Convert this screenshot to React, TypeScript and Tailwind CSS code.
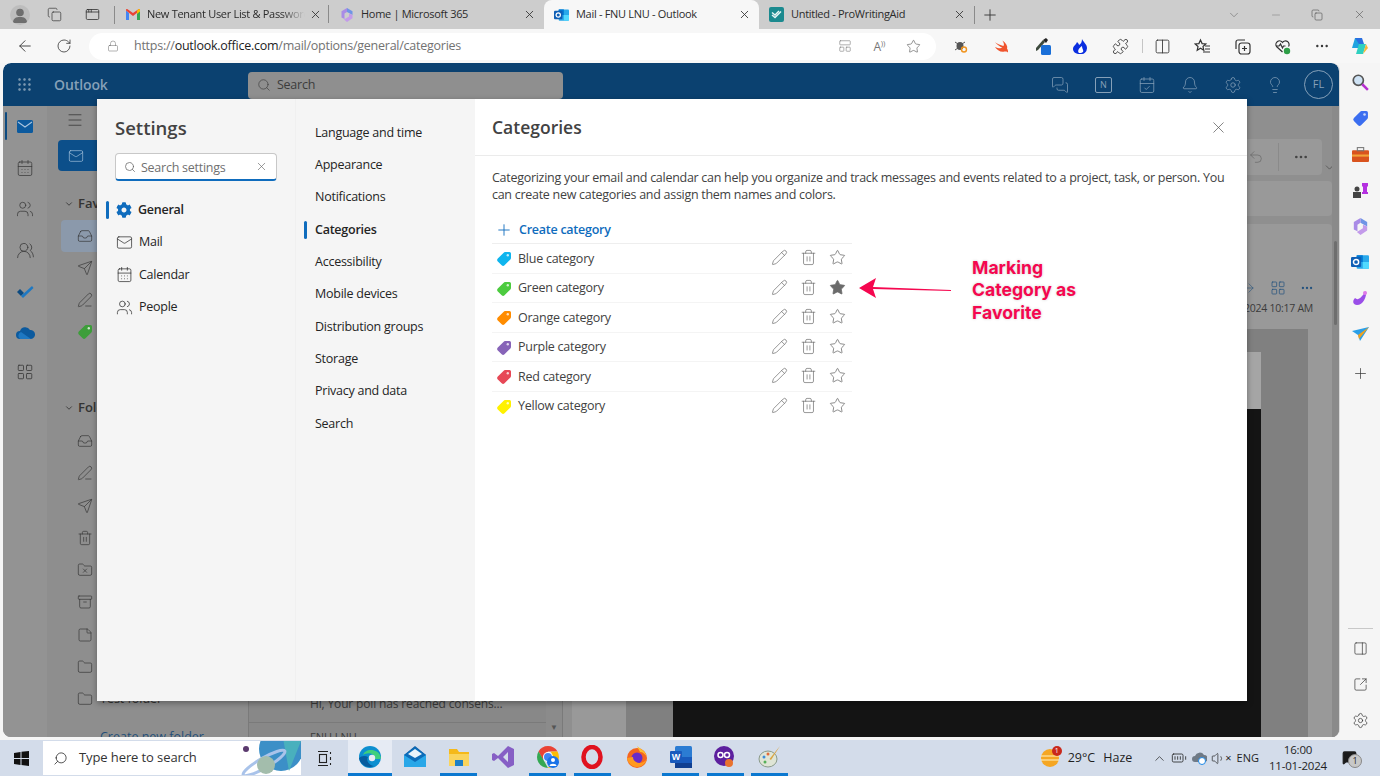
import {
  ArrowLeft, RotateCw, Lock, Star, Plus, X, ChevronDown, ChevronUp, Minus, Copy, Ellipsis, Search, Bell, Settings, Lightbulb,
  Menu, Mail, CalendarDays, Users, UsersRound, Inbox, Send, PenLine, Pencil, Trash2, FolderX, Archive, StickyNote, Folder,
  Undo2, LayoutGrid, ArrowRight, MessagesSquare, CalendarCheck, SquareArrowOutUpRight, PanelRight, Puzzle, Columns2,
  AppWindow, Grip, Volume1, LayoutPanelTop, MessageSquare, BatteryFull,
} from 'lucide-react';
import { FaCog } from 'react-icons/fa';

const font = "font-['Open_Sans','Noto_Sans',sans-serif]";

function Tag({ color, size = 16 }: { color: string; size?: number }) {
  return (
    <svg width={size} height={size} viewBox="0 0 16 16" className="shrink-0">
      <path d="M9 1h4.5A1.5 1.5 0 0 1 15 2.5V7a2 2 0 0 1-.6 1.4l-5.9 5.9a2 2 0 0 1-2.8 0l-3.9-3.9a2 2 0 0 1 0-2.8l5.9-5.9A2 2 0 0 1 9 1z" fill={color} />
      <circle cx="11.8" cy="4.2" r="1.2" fill="#fff" fillOpacity="0.75" />
    </svg>
  );
}

function GmailIcon() {
  return (
    <svg width="14" height="11" viewBox="0 0 14 11">
      <path d="M0 1.5V11h3V4z" fill="#4285f4" />
      <path d="M14 1.5V11h-3V4z" fill="#34a853" />
      <path d="M0 1.5 7 7l7-5.5V1a1 1 0 0 0-1.6-.8L7 4 1.6.2A1 1 0 0 0 0 1z" fill="#ea4335" />
      <path d="M11 1.8V5l3-2.4V1a1 1 0 0 0-1.6-.8z" fill="#fbbc04" />
    </svg>
  );
}

function M365Icon({ size = 14 }: { size?: number }) {
  return (
    <svg width={size} height={size} viewBox="0 0 14 14">
      <path d="M7 0 12.5 3.2V7L9.5 5.3 7 4z" fill="#6f94e6" />
      <path d="M1.5 3.2 7 0v4L4.5 5.5V11L1.5 9.5z" fill="#a98be6" />
      <path d="M12.5 7v3.2L7 14l-3-2.5 5-3V5.5z" fill="#c39bea" />
    </svg>
  );
}

function OutlookIcon({ size = 16 }: { size?: number }) {
  return (
    <svg width={size} height={size} viewBox="0 0 16 16">
      <rect x="5" y="2" width="11" height="12" rx="1" fill="#28a8ea" />
      <rect x="5" y="2" width="5.5" height="6" fill="#0078d4" />
      <rect x="10.5" y="8" width="5.5" height="6" fill="#50d9ff" />
      <rect x="0" y="3.5" width="9" height="9" rx="1" fill="#0f5fb5" />
      <circle cx="4.5" cy="8" r="2.3" fill="none" stroke="#fff" strokeWidth="1.3" />
    </svg>
  );
}

function PwaIcon() {
  return (
    <svg width="15" height="15" viewBox="0 0 15 15">
      <rect width="15" height="15" rx="2" fill="#1b8a8f" />
      <path d="M3 8l3 2.5 6-6M3 5.5l3 2.5 4-4" fill="none" stroke="#e9f6f6" strokeWidth="1.4" />
    </svg>
  );
}

function EdgeIcon() {
  return (
    <svg width="24" height="24" viewBox="0 0 24 24">
      <circle cx="12" cy="12" r="11" fill="#0c8fd0" />
      <path d="M23 13c-1-6-6-8-10-8-4 0-7 2-8 5 3-2 10-3 11 2 0 1-1 2-2 2h6c2 0 3-.5 3-1z" fill="#3fcf7c" />
      <path d="M10 12c-2 3 0 8 6 9-6 3-14-1-15-8 2-2 6-3 9-1z" fill="#075c9e" />
      <circle cx="14" cy="13" r="3.2" fill="#e6ebf4" />
    </svg>
  );
}

function TaskIcon({ kind }: { kind: string }) {
  if (kind === 'edge') return <EdgeIcon />;
  if (kind === 'mail')
    return (
      <svg width="24" height="24" viewBox="0 0 24 24">
        <path d="M12 1 23 10v12H1V10z" fill="#0b5fa8" />
        <rect x="1" y="10" width="22" height="12" fill="#29a7e8" />
        <path d="M1 10l11 7 11-7-11-8z" fill="#0c6cb9" />
        <path d="M5 9l7-5 7 5-7 4z" fill="#e8f3fb" />
      </svg>
    );
  if (kind === 'explorer')
    return (
      <svg width="22" height="22" viewBox="0 0 22 22">
        <path d="M1 3h8l2 3h10v14H1z" fill="#f5b91a" />
        <rect x="1" y="8" width="20" height="12" fill="#fad45c" />
        <rect x="7" y="14" width="8" height="6" fill="#1c7fc7" />
      </svg>
    );
  if (kind === 'vs')
    return (
      <svg width="22" height="24" viewBox="0 0 22 24">
        <path d="M16 1l6 3v16l-6 3L6 13l-4 3-2-1V9l2-1 4 3zM16 7l-5 5 5 5z" fill="#865fc5" fillRule="evenodd" />
      </svg>
    );
  if (kind === 'chrome')
    return (
      <svg width="24" height="24" viewBox="0 0 24 24">
        <path d="M12 1a11 11 0 0 1 9.5 5.5H12z" fill="#ea4335" />
        <path d="M2.5 6.5A11 11 0 0 1 12 1v5.5L7 15z" fill="#ea4335" />
        <path d="M2.5 6.5 7.5 15l4.5 8A11 11 0 0 1 2.5 6.5z" fill="#34a853" />
        <path d="M21.5 6.5A11 11 0 0 1 12 23l5-8-2-8.5z" fill="#fbbc04" />
        <circle cx="12" cy="12" r="5" fill="#fff" />
        <circle cx="12" cy="12" r="4" fill="#4285f4" />
        <circle cx="17" cy="17" r="6" fill="#1a73e8" />
        <circle cx="17" cy="15" r="2" fill="#fff" />
        <path d="M13.5 21c0-3 7-3 7 0z" fill="#fff" />
      </svg>
    );
  if (kind === 'opera')
    return (
      <svg width="22" height="24" viewBox="0 0 22 24">
        <ellipse cx="11" cy="12" rx="8.5" ry="10" fill="none" stroke="#e0121f" strokeWidth="4.5" />
      </svg>
    );
  if (kind === 'firefox')
    return (
      <svg width="22" height="24" viewBox="0 0 22 24">
        <circle cx="11" cy="13" r="10" fill="#f5651f" />
        <path d="M11 1c3 3 8 4 10 11-2-3-4-5-7-5z" fill="#ffbf2e" />
        <circle cx="11" cy="13" r="5.5" fill="#6a2bc9" />
        <path d="M1 13c1 6 6 9 10 9 5 0 8-3 10-8-3 4-8 5-11 3-2-1-3-3-3-5z" fill="#ff9a1f" />
      </svg>
    );
  if (kind === 'word')
    return (
      <svg width="22" height="22" viewBox="0 0 22 22">
        <rect x="5" y="0" width="17" height="22" rx="1.5" fill="#2b7cd3" />
        <rect x="5" y="11" width="17" height="6" fill="#185abd" />
        <rect x="5" y="17" width="17" height="5" fill="#103f91" />
        <rect x="0" y="5" width="12" height="12" rx="1" fill="#185abd" />
        <text x="6" y="14" textAnchor="middle" fontSize="9" fontWeight="700" fontFamily="Liberation Sans" fill="#fff">W</text>
      </svg>
    );
  if (kind === 'infinity')
    return (
      <svg width="24" height="24" viewBox="0 0 24 24">
        <circle cx="11" cy="11" r="10" fill="#5c1f9e" />
        <circle cx="7.5" cy="10" r="2.5" fill="none" stroke="#fff" strokeWidth="1.5" />
        <circle cx="14" cy="10" r="2.5" fill="none" stroke="#fff" strokeWidth="1.5" />
        <circle cx="16" cy="18" r="4" fill="#e9722e" />
      </svg>
    );
  return (
    <svg width="24" height="24" viewBox="0 0 24 24">
      <ellipse cx="10" cy="14" rx="9" ry="8" fill="#dfe5d6" stroke="#8a9a8a" />
      <circle cx="6" cy="12" r="1.5" fill="#3c8bd9" />
      <circle cx="10" cy="9" r="1.5" fill="#e36a3a" />
      <circle cx="7" cy="17" r="1.5" fill="#55b05a" />
      <path d="M22 1 13 15l-1.5-1z" fill="#d9a441" />
    </svg>
  );
}

function Tab({ icon, title, active, fade }: { icon: React.ReactNode; title: string; active?: boolean; fade?: boolean }) {
  return (
    <div className={`h-[29px] w-[215px] shrink-0 flex items-center pl-[9px] pr-[8px] text-[11px] tracking-[-0.3px] text-[#2b2b2b] ${active ? 'bg-[#f7f7f7] rounded-t-lg' : ''}`}>
      <span className="w-[15px] h-[16px] flex items-center justify-center shrink-0 ml-[1px]">{icon}</span>
      <span className={`ml-[7px] flex-1 min-w-0 whitespace-nowrap overflow-hidden ${fade ? '[mask-image:linear-gradient(to_right,black_85%,transparent)]' : ''}`}>{title}</span>
      <X size={13} strokeWidth={1.6} className="ml-[4px] shrink-0 text-[#333]" />
    </div>
  );
}

const middleNav = ['Language and time', 'Appearance', 'Notifications', 'Categories', 'Accessibility', 'Mobile devices', 'Distribution groups', 'Storage', 'Privacy and data', 'Search'];

const categories = [
  { name: 'Blue category', color: '#0fb5ee' },
  { name: 'Green category', color: '#4ccb3f' },
  { name: 'Orange category', color: '#ff8c00' },
  { name: 'Purple category', color: '#8764b8' },
  { name: 'Red category', color: '#e74856' },
  { name: 'Yellow category', color: '#fff100' },
];

function CategoryRow({ name, color, favorite, first }: { name: string; color: string; favorite?: boolean; first?: boolean }) {
  return (
    <div className={`h-[29.5px] flex items-center pl-[4px] pt-[2px] border-t ${first ? 'border-[#eeeeee]' : 'border-[#f4f4f4]'}`}>
      <Tag color={color} size={16} />
      <span className="ml-[6px] flex-1 text-[#424242] text-[12.5px]">{name}</span>
      <div className="flex items-center text-[#6b6b6b] gap-[12px] pr-[6px] -mt-[3px]">
        <Pencil size={17} strokeWidth={1} />
        <Trash2 size={17} strokeWidth={1} />
        <Star size={17} strokeWidth={1.1} className={favorite ? 'fill-[#6b6b6b]' : ''} />
      </div>
    </div>
  );
}

function SettingsModal() {
  return (
    <div className="absolute left-[94px] top-[36px] w-[1150px] h-[602px] flex bg-white shadow-[0_2px_6px_rgba(0,0,0,0.35)] tracking-[-0.25px]">
      <div className="w-[198px] bg-[#f5f5f5] pl-[18px] pr-[18px] pt-[15px]">
        <div className="text-[18.5px] font-semibold text-[#424242] leading-[27px] tracking-normal">Settings</div>
        <div className="mt-[12px] h-[28px] w-[162px] bg-white border border-[#c8c8c8] border-b-2 border-b-[#0f6cbd] rounded flex items-center px-[8px]">
          <Search size={12} strokeWidth={1.5} className="text-[#666]" />
          <span className="ml-[5px] flex-1 text-[12.5px] text-[#707070] pt-[4px]">Search settings</span>
          <X size={13} strokeWidth={1.2} className="text-[#666]" />
        </div>
        <div className="mt-[13px] -ml-[9px] flex flex-col text-[12.5px] text-[#242424]">
          <div className="h-[32.4px] flex items-center">
            <span className="w-[3px] h-[18px] bg-[#0f6cbd] rounded-sm" />
            <FaCog size={16} className="ml-[7px] text-[#0f6cbd]" />
            <span className="ml-[6px] font-semibold">General</span>
          </div>
          <div className="h-[32.4px] flex items-center pl-[10px]">
            <Mail size={17} strokeWidth={1} />
            <span className="ml-[6px]">Mail</span>
          </div>
          <div className="h-[32.4px] flex items-center pl-[10px]">
            <CalendarDays size={17} strokeWidth={1} />
            <span className="ml-[6px]">Calendar</span>
          </div>
          <div className="h-[32.4px] flex items-center pl-[10px]">
            <Users size={17} strokeWidth={1} />
            <span className="ml-[6px]">People</span>
          </div>
        </div>
      </div>
      <div className="w-[180px] bg-[#f5f5f5] border-l border-[#f0f0f0] pt-[18px] text-[12.5px] text-[#242424]">
        {middleNav.map((item) => (
          <div key={item} className="h-[32.33px] flex items-center relative pl-[19px]">
            {item === 'Categories' ? <span className="absolute left-[8px] w-[3px] h-[18px] bg-[#0f6cbd] rounded-sm" /> : null}
            <span className={item === 'Categories' ? 'font-semibold' : ''}>{item}</span>
          </div>
        ))}
      </div>
      <div className="flex-1 bg-white">
        <div className="h-[57px] border-b border-[#ebebeb] pl-[17px] pr-[19px] flex items-center justify-between">
          <span className="text-[17.5px] font-semibold text-[#424242] tracking-normal">Categories</span>
          <X size={19} strokeWidth={0.9} className="text-[#555]" />
        </div>
        <p className="ml-[17px] mt-[13px] w-[740px] text-[12.5px] leading-[17px] tracking-[-0.28px] text-[#424242]">
          Categorizing your email and calendar can help you organize and track messages and events related to a project, task, or person. You can create new categories and assign them names and colors.
        </p>
        <div className="ml-[17px] w-[360px] mt-[14px]">
          <div className="h-[26px] flex items-center pl-[4px] text-[#0f6cbd] font-semibold text-[12.5px]">
            <Plus size={18} strokeWidth={1.2} className="-ml-[1px]" />
            <span className="ml-[6px]">Create category</span>
          </div>
          {categories.map((c, i) => (
            <CategoryRow key={c.name} name={c.name} color={c.color} favorite={c.name === 'Green category'} first={i === 0} />
          ))}
        </div>
      </div>
    </div>
  );
}

function Backdrop() {
  return (
    <div className="flex-1 flex min-h-0 bg-[#8e8e8e] text-[#333]">
      {/* left rail */}
      <div className="w-[44px] shrink-0 bg-[#939393] flex flex-col relative text-[#3a3a3a]">
        <span className="absolute left-[2px] top-[6px] w-[2px] h-[28px] bg-[#0c4a80] rounded" />
        <div className="h-[41.2px] flex items-center justify-center">
          <svg width="16" height="13" viewBox="0 0 16 13"><rect width="16" height="13" rx="1.5" fill="#0c5a9e" /><path d="M1 2l7 5 7-5" fill="none" stroke="#a8c4de" strokeWidth="1.1" /></svg>
        </div>
        <div className="h-[41.2px] flex items-center justify-center"><CalendarDays size={18} strokeWidth={1} /></div>
        <div className="h-[41.2px] flex items-center justify-center"><Users size={18} strokeWidth={1} /></div>
        <div className="h-[41.2px] flex items-center justify-center"><UsersRound size={19} strokeWidth={1} /></div>
        <div className="h-[41.2px] flex items-center justify-center">
          <svg width="18" height="14" viewBox="0 0 18 14"><path d="M1 8l4 4 3-3-4-4z" fill="#0c4a80" /><path d="M5 12 16 2l1.5 2L7 14z" fill="#1e78c2" /></svg>
        </div>
        <div className="h-[41.2px] flex items-center justify-center">
          <svg width="19" height="12" viewBox="0 0 19 12"><path d="M4 12a4 4 0 0 1 0-8 5.5 5.5 0 0 1 10-1 4.5 4.5 0 0 1 1 9z" fill="#0c5a9e" /><path d="M4 12a4 4 0 0 1 1-7l10 7z" fill="#1e78c2" /></svg>
        </div>
        <div className="h-[37px] flex items-center justify-center"><LayoutGrid size={18} strokeWidth={1.1} /></div>
      </div>
      {/* folder pane */}
      <div className="w-[201px] shrink-0 bg-[#8e8e8e] pl-[11px] relative overflow-hidden">
        <Menu size={18} strokeWidth={1} className="mt-[5px] ml-[8px]" />
        <div className="mt-[11px] h-[31px] w-[120px] bg-[#0c4f8a] rounded flex items-center pl-[10px] text-[#a8c4de]"><Mail size={16} strokeWidth={1} /></div>
        <div className="mt-[19px] h-[28px] flex items-center pl-[6px] font-semibold text-[13px] gap-[4px]"><ChevronDown size={10} />Favorites</div>
        <div className="mt-[2px] h-[32px] w-[170px] rounded bg-[#8b99ab] ml-[3px] pl-[16px] flex items-center"><Inbox size={16} strokeWidth={1} /></div>
        <div className="pl-[19px] flex flex-col gap-[16px] mt-[8px]">
          <Send size={16} strokeWidth={1} />
          <PenLine size={16} strokeWidth={1} />
          <Tag color="#3d9e3a" size={16} />
        </div>
        <div className="mt-[56px] h-[24px] flex items-center pl-[6px] font-semibold text-[13px] gap-[4px]"><ChevronDown size={10} />Folders</div>
        <div className="pl-[19px] flex flex-col gap-[16.3px] mt-[13px]">
          <Inbox size={16} strokeWidth={1} />
          <PenLine size={16} strokeWidth={1} />
          <Send size={16} strokeWidth={1} />
          <Trash2 size={16} strokeWidth={1} />
          <FolderX size={16} strokeWidth={1} />
          <Archive size={16} strokeWidth={1} />
          <StickyNote size={16} strokeWidth={1} />
          <Folder size={16} strokeWidth={1} />
          <div className="h-[16px] flex items-center gap-[7px] text-[12.5px] whitespace-nowrap"><Folder size={16} strokeWidth={1} className="shrink-0" />Test folder</div>
        </div>
        <div className="mt-[21px] pl-[42px] text-[12.5px] text-[#234e78] whitespace-nowrap">Create new folder</div>
      </div>
      {/* message list */}
      <div className="w-[315px] shrink-0 border-x border-[#7a7a7a] bg-[#888] flex">
        <div className="flex-1 min-w-0 flex flex-col justify-end">
          <div className="h-[38px] pl-[61px] pt-[10px] text-[12px] tracking-[-0.15px] text-[#3b3b3b] border-b border-[#7a7a7a] whitespace-nowrap">Hi, Your poll has reached consens...</div>
          <div className="h-[14px] pl-[61px] pt-[6px] text-[11px] overflow-hidden text-[#3b3b3b]">FNU LNU</div>
        </div>
        <div className="w-[16px] bg-[#8b8b8b] flex flex-col justify-end items-center pb-[6px] text-[#555] text-[8px] leading-none">▼</div>
      </div>
      {/* reading pane */}
      <div className="flex-1 flex flex-col min-w-0 bg-[#8f8f8f] pl-[9px] relative">
        <div className="pt-[33px] flex items-start justify-end pr-[17px]">
          <div className="h-[36px] w-[100px] bg-[#999] rounded flex items-center justify-end text-[#444]">
            <Undo2 size={16} strokeWidth={1} className="text-[#666] mr-[14px]" />
            <span className="w-px h-[28px] bg-[#8a8a8a] mr-[14px]" />
            <Ellipsis size={16} className="mr-[13px]" />
          </div>
        </div>
        <ChevronDown size={13} strokeWidth={1} className="absolute right-[3px] top-[55px]" />
        <div className="mt-[6px] mr-[7px] h-[35px] rounded bg-[#999]" />
        <div className="mt-[8px] mr-[7px] flex-1 rounded-t bg-[#999] flex flex-col min-h-0 pt-[54px]">
          <div className="flex items-center justify-end gap-[14px] pr-[18px] text-[#24527e] h-[20px]">
            <ArrowRight size={14} strokeWidth={1} />
            <LayoutGrid size={16} strokeWidth={1.1} />
            <Ellipsis size={14} />
          </div>
          <div className="text-right pr-[19px] text-[10.5px] tracking-[-0.25px] text-[#3b3b3b] mt-[3px]">1/9/2024 10:17 AM</div>
          <div className="mt-[12px] ml-[54px] mr-[24px] flex-1 bg-[#808080] pt-[23px] pl-[47px] pr-[47px] flex flex-col min-h-0">
            <div className="h-[57px] bg-[#a5a5a5] shrink-0" />
            <div className="flex-1 bg-[#141414]" />
          </div>
        </div>
        <div className="absolute right-0 top-[0] w-[7px] h-full bg-[#8a8a8a] flex justify-center">
          <span className="mt-[135px] w-[3px] h-[84px] bg-[#6e6e6e] rounded" />
        </div>
      </div>
    </div>
  );
}

function TabStrip() {
  return (
    <div className="h-[29px] shrink-0 bg-[#cdcdcd] flex items-center text-[#333]">
      <div className="w-[115px] shrink-0 flex items-center relative h-full">
        <span className="ml-[10px] w-[20px] h-[20px] rounded-full bg-[#bdbdbd] flex items-center justify-center overflow-hidden">
          <svg width="20" height="20" viewBox="0 0 20 20"><circle cx="10" cy="7.5" r="3.8" fill="#6e6e6e" /><path d="M3 18c0-5 3-6 7-6s7 1 7 6z" fill="#6e6e6e" /></svg>
        </span>
        <Copy size={15} strokeWidth={1.1} className="ml-[17px]" />
        <AppWindow size={15} strokeWidth={1.3} className="ml-[23px]" />
        <span className="absolute right-0 w-px h-[18px] bg-[#8a8a8a]" />
      </div>
      <div className="w-[214px] shrink-0 h-[29px] relative">
        <Tab icon={<GmailIcon />} title="New Tenant User List & Passwords" fade />
        <span className="absolute right-0 top-[5px] w-px h-[18px] bg-[#8a8a8a]" />
      </div>
      <Tab icon={<M365Icon />} title="Home | Microsoft 365" />
      <Tab icon={<OutlookIcon />} title="Mail - FNU LNU - Outlook" active />
      <Tab icon={<PwaIcon />} title="Untitled - ProWritingAid" />
      <span className="w-px h-[18px] bg-[#8a8a8a]" />
      <Plus size={18} strokeWidth={1.2} className="ml-[6px]" />
      <div className="flex-1 flex items-center justify-end pr-[14px] text-[#444]">
        <ChevronDown size={14} strokeWidth={1} className="mr-[29px] text-[#666]" />
        <Minus size={12} strokeWidth={1} className="mr-[29px] text-[#777]" />
        <Copy size={12} strokeWidth={1.1} className="mr-[30px]" />
        <X size={13} strokeWidth={1} />
      </div>
    </div>
  );
}

function AddressBar() {
  return (
    <div className="h-[34px] shrink-0 bg-[#f7f7f7] flex items-center text-[#333]">
      <ArrowLeft size={18} strokeWidth={1.2} className="ml-[16px]" />
      <RotateCw size={16} strokeWidth={1.2} className="ml-[22px]" />
      <div className="ml-[17px] w-[847px] h-[27px] rounded-full bg-white flex items-center pl-[18px] text-[12.5px] tracking-[-0.25px]">
        <Lock size={12} strokeWidth={1} className="text-[#666]" />
        <span className="ml-[15px] flex-1 whitespace-nowrap text-[#727272]">
          https://<span className="text-[#1d1d1d]">outlook.office.com</span>/mail/options/general/categories
        </span>
        <LayoutPanelTop size={14} strokeWidth={1} className="text-[#777]" />
        <span className="ml-[21px] text-[12px] text-[#777]">A<span className="text-[8px] align-super">))</span></span>
        <Star size={15} strokeWidth={1} className="ml-[21px] mr-[15px] text-[#555]" />
      </div>
      <div className="flex-1 flex items-center">
        <span className="ml-[18px] w-[14px] h-[14px] flex items-center justify-center">
          <svg width="14" height="14" viewBox="0 0 14 14"><ellipse cx="6" cy="7" rx="3.5" ry="4" fill="#555" /><path d="M1 3l3 2M1 11l3-2M11 3 8 5" stroke="#555" /><circle cx="10" cy="10.5" r="2.5" fill="none" stroke="#f0941f" strokeWidth="1.4" /></svg>
        </span>
        <span className="ml-[26px] w-[14px] flex justify-center">
          <svg width="15" height="14" viewBox="0 0 15 14"><path d="M1 3c3 3 6 5 8 6-3 1-5 0-8-1 2 3 6 6 10 5 2 0 3 0 4 1 0-2 0-3-1-4 1-3-1-6-5-9 2 3 2 5 1 6C7 6 4 5 1 3z" fill="#f0542d" /></svg>
        </span>
        <span className="ml-[26px] w-[18px] flex justify-center">
          <svg width="18" height="18" viewBox="0 0 18 18"><path d="M2 11 9 3l2 2-7 8-2 1z" fill="#3d4a3d" /><path d="M9 3l3-2 2 2-2 3z" fill="#222" /><rect x="7" y="8" width="10" height="10" rx="1.5" fill="#1a6fd8" /></svg>
        </span>
        <span className="ml-[21px] w-[14px] flex justify-center">
          <svg width="14" height="15" viewBox="0 0 14 15"><path d="M9 0c1 3 5 5 5 9a6 6 0 0 1-7 6c-4 0-7-2-7-5s3-4 4-7c1 1 2 2 2 3 2-1 3-3 3-6z" fill="#0a2ee0" /><path d="M6 14c-2-2 0-5 3-7 0 3 2 4 1 6-1 1-3 1-4 1z" fill="#fff" /></svg>
        </span>
        <Puzzle size={17} strokeWidth={1.2} className="ml-[25px]" />
        <span className="ml-[13px] w-px h-[14px] bg-[#c5c5c5]" />
        <Columns2 size={17} strokeWidth={1.2} className="ml-[11px]" />
        <svg width="17" height="17" viewBox="0 0 17 17" fill="none" stroke="currentColor" strokeWidth="1.2" className="ml-[23px]">
          <path d="M6.5 2l1.6 3.6 3.7.4-2.8 2.5.8 3.8-3.3-2-3.3 2 .8-3.8L1.2 6l3.7-.4z" />
          <path d="M11 8h5M11 11h5M9 14h7" />
        </svg>
        <svg width="17" height="17" viewBox="0 0 17 17" fill="none" stroke="currentColor" strokeWidth="1.2" className="ml-[23px]">
          <path d="M2 11V4a2 2 0 0 1 2-2h7" />
          <rect x="5" y="5" width="11" height="11" rx="2.5" />
          <path d="M10.5 8v5M8 10.5h5" />
        </svg>
        <svg width="17" height="17" viewBox="0 0 17 17" fill="none" stroke="currentColor" strokeWidth="1.2" className="ml-[23px]">
          <path d="M8.5 14 2.5 8.5a3.5 3.5 0 0 1 6-4 3.5 3.5 0 0 1 6 4" />
          <path d="M2 8h3l1.5-2 2 4 1-2h2" />
          <circle cx="13" cy="13" r="3.2" fill="#2e9e47" stroke="none" />
        </svg>
        <Ellipsis size={16} strokeWidth={1.6} className="ml-[23px]" />
        <span className="ml-[19px]">
          <svg width="20" height="20" viewBox="0 0 20 20"><path d="M6 2h7l-3 10H3z" fill="#1fa3e0" /><path d="M14 18H7l3-10h7z" fill="#2fd0c0" /><path d="M6 2h7l2 6h-5z" fill="#2a6fe0" /><path d="M14 18 17 8l2 4z" fill="#f5b93a" /></svg>
        </span>
      </div>
    </div>
  );
}

function OutlookHeader() {
  return (
    <div className="h-[43px] shrink-0 bg-[#0b4170] flex items-center text-[#86a0b8] rounded-t-lg">
      <Grip size={17} strokeWidth={1.5} className="ml-[13px] text-[#8ba4ba]" />
      <span className="ml-[21px] w-[194px] text-[14px] font-semibold tracking-[-0.1px]">Outlook</span>
      <div className="w-[315px] h-[27px] mt-[1px] rounded bg-[#8f8f8f] flex items-center pl-[9px] text-[#3c3c3c] text-[12.5px] tracking-[-0.25px]">
        <Search size={14} strokeWidth={1.1} />
        <span className="ml-[6px]">Search</span>
      </div>
      <div className="flex-1 flex items-center justify-end pr-[6px]">
        <MessagesSquare size={18} strokeWidth={1} />
        <span className="ml-[26px] w-[17px] h-[16px] flex items-center justify-center border border-[#86a0b8] text-[9px] leading-none rounded-[2px]">N</span>
        <CalendarCheck size={18} strokeWidth={1} className="ml-[26px]" />
        <Bell size={18} strokeWidth={1} className="ml-[25px]" />
        <Settings size={18} strokeWidth={1} className="ml-[25px]" />
        <Lightbulb size={18} strokeWidth={1} className="ml-[24px]" />
        <span className="ml-[20px] w-[29px] h-[29px] rounded-full border border-[#86a0b8] flex items-center justify-center text-[11px]">FL</span>
      </div>
    </div>
  );
}

function EdgeSidebar() {
  return (
    <div className="w-[40px] shrink-0 bg-[#f5f5f5] flex flex-col items-center pt-[1px] text-[#333]">
      <div className="h-[36px] flex items-center">
        <svg width="18" height="18" viewBox="0 0 16 16"><circle cx="6.5" cy="6.5" r="4.5" fill="#cfe3f5" stroke="#555" strokeWidth="1.5" /><path d="M10 10l5 5" stroke="#b52fd0" strokeWidth="2.2" /></svg>
      </div>
      <div className="h-[36px] flex items-center"><Tag color="#3b6ef0" size={17} /></div>
      <div className="h-[36px] flex items-center">
        <svg width="17" height="15" viewBox="0 0 16 14"><rect y="3" width="16" height="11" rx="1" fill="#d9531e" /><rect y="7" width="16" height="2" fill="#f2a33a" /><rect x="5" y="0.5" width="6" height="3" fill="none" stroke="#777" /></svg>
      </div>
      <div className="h-[36px] flex items-center">
        <svg width="17" height="16" viewBox="0 0 17 16"><circle cx="5" cy="7" r="2.5" fill="#444" /><rect x="1" y="10" width="8" height="6" fill="#444" /><path d="M10 1h6v3l-1 1v5h1v2h-6v-2h1V5l-1-1z" fill="#b430e0" /></svg>
      </div>
      <div className="h-[36px] flex items-center"><M365Icon size={17} /></div>
      <div className="h-[36px] flex items-center"><OutlookIcon size={18} /></div>
      <div className="h-[36px] flex items-center">
        <svg width="17" height="16" viewBox="0 0 17 16"><path d="M14 1C15 7 11 15 5 15 1 15 0 11 3 8c3 3 6 0 11-7z" fill="#9a4ee8" /><circle cx="13" cy="3" r="2" fill="#e07ae8" /></svg>
      </div>
      <div className="h-[36px] flex items-center">
        <svg width="17" height="14" viewBox="0 0 17 14"><path d="M0 4 17 0 8 14 6 8z" fill="#2a9fe8" /><path d="M6 8 17 0 7 12z" fill="#f0a21f" /></svg>
      </div>
      <div className="h-[36px] mt-[3px] flex items-center"><Plus size={17} strokeWidth={1} /></div>
      <div className="flex-1" />
      <div className="w-[25px] h-px bg-[#c8c8c8] mb-[1px]" />
      <div className="h-[36px] flex items-center"><PanelRight size={15} strokeWidth={1.1} /></div>
      <div className="h-[36px] flex items-center"><SquareArrowOutUpRight size={15} strokeWidth={1.1} /></div>
      <div className="h-[36px] mb-[2px] flex items-center"><Settings size={17} strokeWidth={1} /></div>
    </div>
  );
}

function Taskbar() {
  const apps = [
    { kind: 'edge', on: true, active: true },
    { kind: 'mail' },
    { kind: 'explorer', on: true },
    { kind: 'vs' },
    { kind: 'chrome', on: true },
    { kind: 'opera', on: true },
    { kind: 'firefox' },
    { kind: 'word', on: true },
    { kind: 'infinity', on: true },
    { kind: 'paint', on: true },
  ];
  return (
    <div className="h-[36px] shrink-0 bg-[#d3dcea] flex items-center text-[#1f1f1f] text-[12.5px]">
      <div className="w-[43px] flex justify-center">
        <svg width="15" height="15" viewBox="0 0 15 15"><path d="M0 2l6.5-1v6H0zM7.5.8 15 0v7H7.5zM0 8h6.5v6L0 13zM7.5 8H15v7l-7.5-1z" fill="#111" /></svg>
      </div>
      <div className="w-[258px] h-[34px] bg-white flex items-center pl-[10px] overflow-hidden relative">
        <Search size={15} strokeWidth={1.2} className="-scale-x-100" />
        <span className="ml-[11px] text-[13px] tracking-[-0.1px] text-[#333]">Type here to search</span>
        <svg width="62" height="34" viewBox="0 0 62 34" className="absolute right-0 top-0">
          <circle cx="42" cy="8" r="22" fill="#3c8fc7" />
          <path d="M42-14a22 22 0 0 1 20 14L50 30z" fill="#49b0bd" />
          <ellipse cx="25" cy="22" rx="24" ry="5" transform="rotate(-30 25 22)" fill="none" stroke="#a9c3ea" strokeWidth="3" />
          <circle cx="27" cy="24" r="9" fill="#a3bdac" />
          <circle cx="7" cy="8" r="3" fill="#5b3a6e" />
        </svg>
      </div>
      <div className="w-[47px] flex justify-center">
        <svg width="15" height="17" viewBox="0 0 15 17" fill="none" stroke="#222" strokeWidth="1.1">
          <rect x="2.5" y="4.5" width="7" height="8" />
          <path d="M1 1.5h10M1 15.5h10M13.5 2v2M13.5 7v3M13.5 13v2" />
        </svg>
      </div>
      <div className="flex items-stretch h-full">
        {apps.map((a) => (
          <div key={a.kind} className={`w-[44.4px] h-full flex flex-col items-center ${a.active ? 'bg-[#e6ebf4]' : ''}`}>
            <div className="flex-1 flex items-center justify-center"><TaskIcon kind={a.kind} /></div>
            {a.on ? <span className={`h-[3px] bg-[#0b78d0] ${a.active ? 'w-full' : 'w-[37px]'}`} /> : <span className="h-[3px]" />}
          </div>
        ))}
      </div>
      <div className="flex-1 flex items-center justify-end h-full text-[12.5px]">
        <span className="relative w-[20px] h-[20px]">
          <svg width="20" height="20" viewBox="0 0 20 20"><circle cx="10" cy="10" r="9" fill="#f5a623" /><path d="M1 8h18M1 12h18" stroke="#fff3c4" /></svg>
          <span className="absolute -right-[2px] -top-[2px] w-[10px] h-[10px] rounded-full bg-[#c9291c] text-white text-[7px] leading-[10px] text-center">1</span>
        </span>
        <span className="ml-[8px]">29°C</span>
        <span className="ml-[8px]">Haze</span>
        <ChevronUp size={15} strokeWidth={1.1} className="ml-[20px]" />
        <BatteryFull size={16} strokeWidth={1.2} className="ml-[4px]" />
        <svg width="16" height="14" viewBox="0 0 16 14" className="ml-[4px]"><path d="M4 11a3 3 0 0 1 0-6 5 5 0 0 1 9-1 3.5 3.5 0 0 1 0 7z" fill="#6f7a86" /><circle cx="11" cy="10" r="3.5" fill="#fff" stroke="#1e88e5" /></svg>
        <Volume1 size={15} strokeWidth={1.1} className="ml-[4px]" />
        <span className="text-[11px] -ml-[1px]">×</span>
        <span className="ml-[5px] text-[11px]">ENG</span>
        <div className="ml-[10px] flex flex-col items-center text-[11.5px] tracking-[-0.2px] leading-[16px]">
          <span>16:00</span>
          <span>11-01-2024</span>
        </div>
        <span className="ml-[15px] mr-[22px] relative w-[16px] h-[16px]">
          <MessageSquare size={15} fill="#1a1a1a" />
          <span className="absolute left-[6px] top-[4px] w-[14px] h-[14px] rounded-full bg-[#c8c8c8] border border-[#888] text-[9px] leading-[12px] text-center">1</span>
        </span>
      </div>
    </div>
  );
}

export default function App() {
  return (
    <div className={`w-[1380px] h-[776px] overflow-hidden flex flex-col bg-[#f5f5f5] relative ${font}`}>
      <TabStrip />
      <AddressBar />
      <div className="flex-1 flex min-h-0 pl-[3px]">
        <div className="flex-1 min-w-0 flex flex-col relative rounded-lg overflow-hidden mb-[3px] border-r border-[#d8d8d8]">
          <OutlookHeader />
          <Backdrop />
          <SettingsModal />
        </div>
        <EdgeSidebar />
      </div>
      <Taskbar />
      {/* annotation over the page */}
      <div className="absolute left-[859px] top-[276px]">
        <svg width="94" height="24" viewBox="0 0 94 24">
          <path d="M0 12 17 2l-3 9 78 3v1l-78-2 3 9z" fill="#f5074f" />
        </svg>
      </div>
      <div className="absolute left-[972px] top-[257px] font-['Inter',sans-serif] text-[17.6px] leading-[22.3px] font-bold text-[#f5074f] [text-shadow:0_0_3px_#cfcfcf]">
        Marking<br />Category as<br />Favorite
      </div>
    </div>
  );
}
